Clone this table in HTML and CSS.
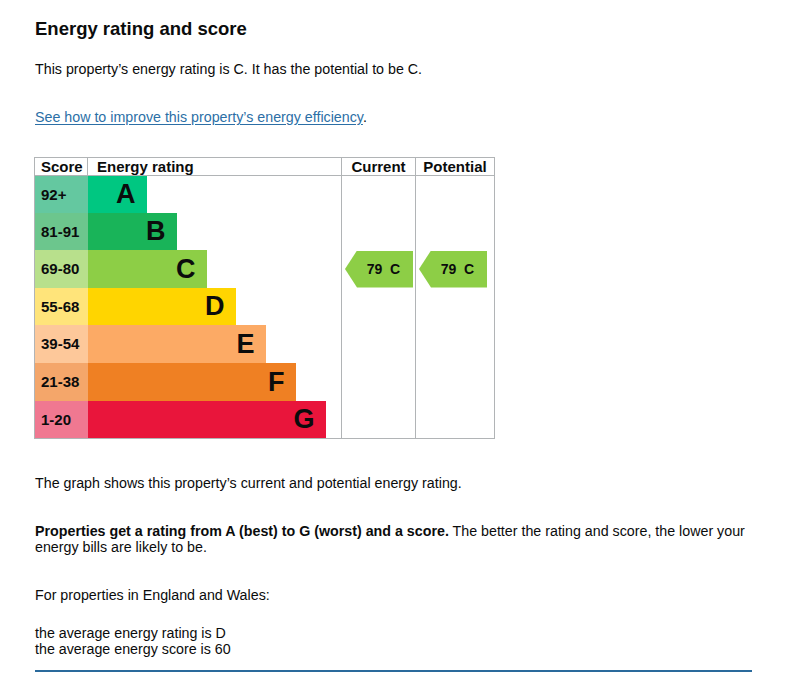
FILE: index.html
```html
<!DOCTYPE html>
<html lang="en">
<head>
<meta charset="utf-8">
<title>Energy rating and score</title>
<link rel="stylesheet" href="styles.css">
</head>
<body>
<main class="page">
  <h2 class="title">Energy rating and score</h2>
  <p class="intro">This property’s energy rating is C. It has the potential to be C.</p>
  <p class="link-line"><a class="link" href="#">See how to improve this property’s energy efficiency</a>.</p>

  <table class="epc">
    <colgroup>
      <col class="c-score">
      <col class="c-rating">
      <col class="c-cur">
      <col class="c-pot">
    </colgroup>
    <thead>
      <tr>
        <th class="h-score">Score</th>
        <th class="h-rating">Energy rating</th>
        <th class="h-col">Current</th>
        <th class="h-col">Potential</th>
      </tr>
    </thead>
    <tbody>
      <tr class="row r1">
        <td class="score s-a">92+</td>
        <td class="rating"><div class="bar b-a">A</div></td>
        <td class="col"></td>
        <td class="col"></td>
      </tr>
      <tr class="row r2">
        <td class="score s-b">81-91</td>
        <td class="rating"><div class="bar b-b">B</div></td>
        <td class="col"></td>
        <td class="col"></td>
      </tr>
      <tr class="row r3">
        <td class="score s-c">69-80</td>
        <td class="rating"><div class="bar b-c">C</div></td>
        <td class="col"><div class="arrow">79&nbsp; C</div></td>
        <td class="col"><div class="arrow">79&nbsp; C</div></td>
      </tr>
      <tr class="row r4">
        <td class="score s-d">55-68</td>
        <td class="rating"><div class="bar b-d">D</div></td>
        <td class="col"></td>
        <td class="col"></td>
      </tr>
      <tr class="row r5">
        <td class="score s-e">39-54</td>
        <td class="rating"><div class="bar b-e">E</div></td>
        <td class="col"></td>
        <td class="col"></td>
      </tr>
      <tr class="row r6">
        <td class="score s-f">21-38</td>
        <td class="rating"><div class="bar b-f">F</div></td>
        <td class="col"></td>
        <td class="col"></td>
      </tr>
      <tr class="row r7">
        <td class="score s-g">1-20</td>
        <td class="rating"><div class="bar b-g">G</div></td>
        <td class="col"></td>
        <td class="col"></td>
      </tr>
    </tbody>
  </table>

  <p class="graph">The graph shows this property’s current and potential energy rating.</p>
  <p class="explain"><strong>Properties get a rating from A (best) to G (worst) and a score.</strong> The better the rating and score, the lower your energy bills are likely to be.</p>
  <p class="region">For properties in England and Wales:</p>
  <p class="average">the average energy rating is D<br>the average energy score is 60</p>
  <div class="rule"></div>
</main>
</body>
</html>
```

FILE: styles.css
```css
html, body {
  margin: 0;
  padding: 0;
  background: #ffffff;
}

body {
  font-family: "Liberation Sans", Arial, Helvetica, sans-serif;
  color: #0b0c0c;
  font-size: 14.25px;
  line-height: 16px;
}

.page {
  width: 717px;
  padding: 0 0 0 35px;
}

.title {
  margin: 17px 0 0;
  font-size: 18.5px;
  line-height: 24px;
  font-weight: 700;
}

.intro {
  margin: 20px 0 0;
}

.link-line {
  margin: 32px 0 0;
}

.link {
  color: #2c6fa6;
  text-decoration: underline;
  text-underline-offset: 2px;
}

.epc {
  margin: 32px 0 0 -1px;
  border-collapse: collapse;
  border: 1px solid #b1b4b6;
  table-layout: fixed;
  width: 460px;
}

.c-score { width: 53px; }
.c-rating { width: 254px; }
.c-cur { width: 74px; }
.c-pot { width: 79px; }

.epc th {
  font-weight: 700;
  font-size: 15px;
  line-height: 17px;
  height: 17px;
  padding: 0;
  text-align: left;
  border-bottom: 1px solid #b1b4b6;
  vertical-align: middle;
  white-space: nowrap;
}

.epc th.h-score {
  padding-left: 6px;
  border-right: 1px solid #b1b4b6;
}

.epc th.h-rating {
  padding-left: 9px;
}

.epc th.h-col {
  text-align: center;
  border-left: 1px solid #b1b4b6;
}

.epc td {
  padding: 0;
  vertical-align: middle;
}

.row td { height: 37px; }
.r3 td, .r5 td, .r6 td { height: 38px; }

.epc td.score {
  font-weight: 700;
  font-size: 15px;
  padding-left: 6px;
}

.bar {
  height: 37px;
  display: flex;
  align-items: center;
  justify-content: flex-end;
  padding-right: 11px;
  box-sizing: border-box;
  font-size: 27px;
  font-weight: 700;
  line-height: 1;
  color: #0b0c0c;
}

.r3 .bar, .r5 .bar, .r6 .bar { height: 38px; }

.s-a { background: #64c8a0; }
.s-b { background: #6cc68d; }
.s-c { background: #b8e08c; }
.s-d { background: #ffe47a; }
.s-e { background: #fdc89a; }
.s-f { background: #f4a66a; }
.s-g { background: #f07891; }

.b-a { background: #00c781; width: 59px; }
.b-b { background: #19b459; width: 89px; }
.b-c { background: #8dce46; width: 119px; }
.b-d { background: #ffd500; width: 148px; }
.b-e { background: #fcaa65; width: 178px; }
.b-f { background: #ef8023; width: 208px; }
.b-g { background: #e9153b; width: 238px; }

.col {
  border-left: 1px solid #b1b4b6;
}

.arrow {
  margin-left: 3px;
  width: 68px;
  height: 37px;
  background: #8dce46;
  clip-path: polygon(0 50%, 12px 0, 100% 0, 100% 100%, 12px 100%);
  display: flex;
  align-items: center;
  justify-content: center;
  padding-left: 9px;
  box-sizing: border-box;
  font-weight: 700;
  font-size: 14px;
}

.graph {
  margin: 36px 0 0;
}

.explain {
  margin: 32px 0 0;
}

.region {
  margin: 32px 0 0;
}

.average {
  margin: 22px 0 0;
}

.rule {
  margin-top: 13px;
  height: 2px;
  background: #2a6a9c;
}
```
